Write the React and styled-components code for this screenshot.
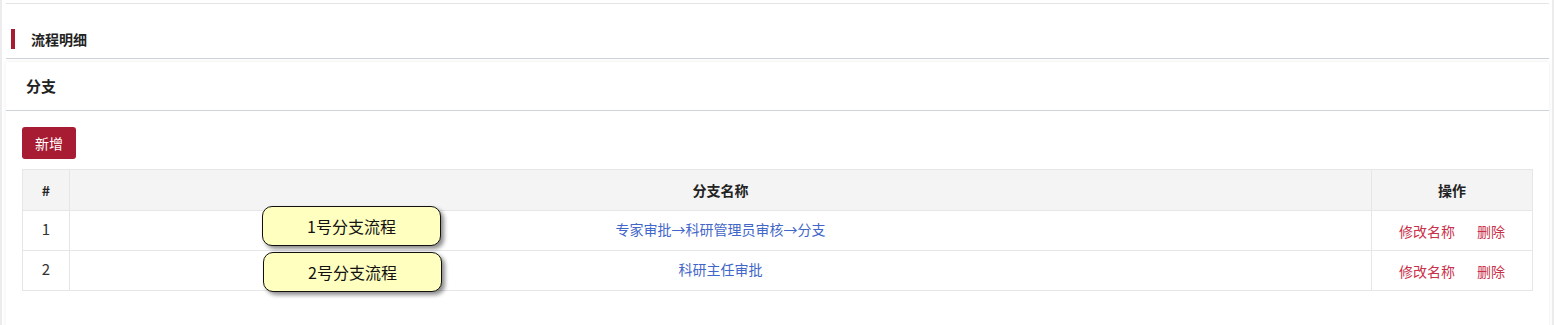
import React from "react";
import styled, { createGlobalStyle } from "styled-components";

const branches = [
  { id: 1, name: "专家审批→科研管理员审核→分支", tip: "1号分支流程" },
  { id: 2, name: "科研主任审批", tip: "2号分支流程" },
];

function App() {
  return (
    <>
      <GlobalStyle />
      <Page>
        <Section>
          <SectionHead>
            <Mark />
            <SectionTitle>流程明细</SectionTitle>
          </SectionHead>
          <Card>
            <CardHead>分支</CardHead>
            <CardBody>
              <AddButton>新增</AddButton>
              <TableWrap>
                <Table>
                  <thead>
                    <tr>
                      <Th width="46px">#</Th>
                      <Th>分支名称</Th>
                      <Th width="160px">操作</Th>
                    </tr>
                  </thead>
                  <tbody>
                    {branches.map((b) => (
                      <tr key={b.id}>
                        <Td>{b.id}</Td>
                        <Td>
                          <Link>{b.name}</Link>
                        </Td>
                        <Td>
                          <Actions>
                            <Link danger>修改名称</Link>
                            <Link danger>删除</Link>
                          </Actions>
                        </Td>
                      </tr>
                    ))}
                  </tbody>
                </Table>
                {branches.map((b, i) => (
                  <Tip key={b.id} top={i === 0 ? 37 : 83} left={i === 0 ? 240 : 241}>
                    {b.tip}
                  </Tip>
                ))}
              </TableWrap>
            </CardBody>
          </Card>
        </Section>
      </Page>
    </>
  );
}

const GlobalStyle = createGlobalStyle`
  html, body {
    margin: 0;
    padding: 0;
    background: #fff;
    font-family: "Microsoft YaHei", "Noto Sans CJK SC", "Noto Sans", sans-serif;
  }
`;

const Page = styled.div`
  width: 1554px;
  height: 325px;
  box-sizing: border-box;
  border-left: 2px solid #ececec;
  border-right: 2px solid #ececec;
  padding: 3px 3px 0 4px;
  overflow: hidden;
`;

const Section = styled.div`
  border-top: 1px solid #e2e4e6;
`;

const SectionHead = styled.div`
  height: 55px;
  display: flex;
  align-items: flex-end;
  padding: 0 0 9px 5px;
  box-sizing: border-box;
  border-bottom: 1px solid #cdd3d8;
`;

const Mark = styled.span`
  width: 4px;
  height: 20px;
  background: #a81c33;
`;

const SectionTitle = styled.span`
  margin-left: 16px;
  font-size: 14px;
  font-weight: bold;
  color: #222;
  line-height: 20px;
`;

const Card = styled.div`
  margin-top: 3px;
  box-shadow: 0 0 4px rgba(0, 0, 0, 0.08);
`;

const CardHead = styled.div`
  height: 48px;
  line-height: 48px;
  padding-left: 20px;
  font-size: 15px;
  font-weight: bold;
  color: #222;
  border-bottom: 1px solid #cdd3d8;
`;

const CardBody = styled.div`
  padding: 16px 16px 60px;
`;

const AddButton = styled.button`
  display: block;
  width: 54px;
  height: 32px;
  border: none;
  border-radius: 3px;
  background: #a81c33;
  color: #fff;
  font-family: inherit;
  font-size: 14px;
  padding: 0;
  cursor: pointer;
`;

const TableWrap = styled.div`
  position: relative;
  margin-top: 10px;
`;

const Table = styled.table`
  width: 100%;
  border-collapse: collapse;
  font-size: 15px;
  color: #333;
`;

const Th = styled.th`
  width: ${(p) => p.width || "auto"};
  height: 40px;
  padding: 0;
  background: #f4f4f4;
  border: 1px solid #e6e6e6;
  font-size: 14px;
  font-weight: bold;
  color: #222;
  text-align: center;
`;

const Td = styled.td`
  height: 35px;
  padding: 0 0 4px;
  border: 1px solid #e6e6e6;
  text-align: center;
`;

const Actions = styled.div`
  display: flex;
  justify-content: center;
  gap: 22px;
  margin-top: 4px;
`;

const Link = styled.a`
  color: ${(p) => (p.danger ? "#c9304b" : "#3f66c8")};
  font-size: 14px;
  cursor: pointer;
`;

const Tip = styled.div`
  position: absolute;
  top: ${(p) => p.top}px;
  left: ${(p) => p.left}px;
  width: 179px;
  height: 40px;
  box-sizing: border-box;
  border: 1px solid #111;
  border-radius: 10px;
  background: #ffffc0;
  box-shadow: 3px 3px 4px rgba(0, 0, 0, 0.45);
  display: flex;
  align-items: center;
  justify-content: center;
  font-family: "Noto Sans CJK SC", sans-serif;
  font-size: 16px;
  color: #111;
`;

export default App;
